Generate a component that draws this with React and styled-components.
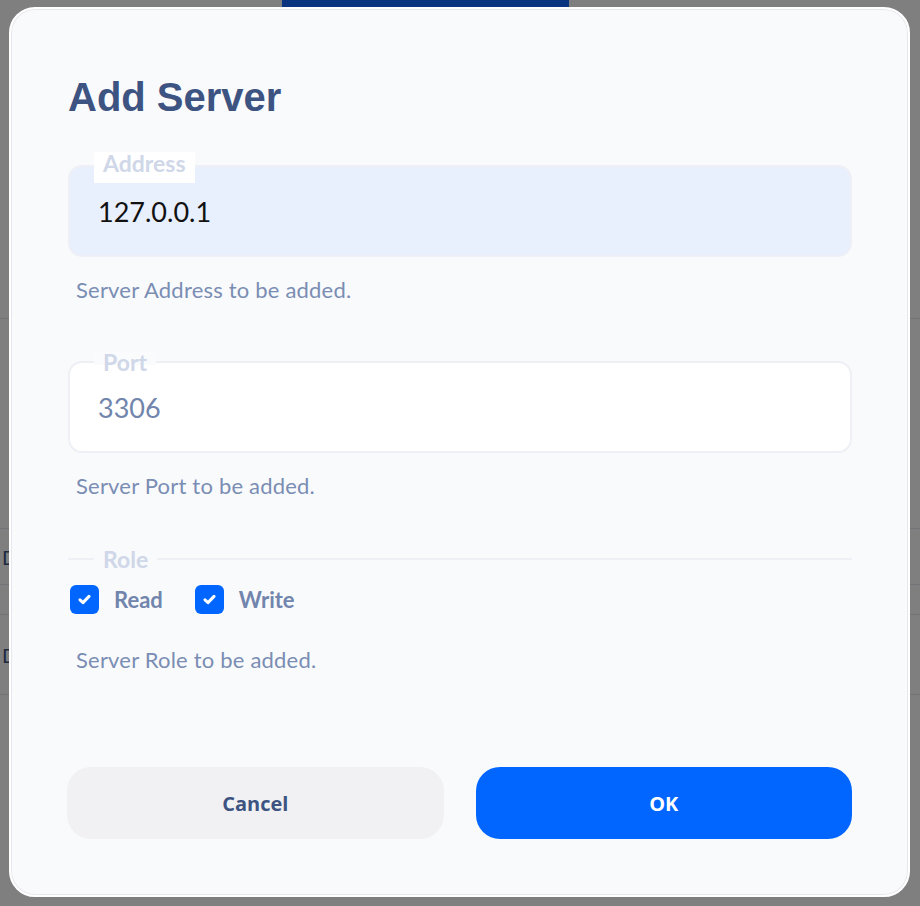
import React from "react";
import styled, { createGlobalStyle } from "styled-components";

const GlobalStyle = createGlobalStyle`
  html, body {
    margin: 0;
    padding: 0;
    height: 100%;
    background: #ffffff;
    font-family: "Lato", "Noto Sans", sans-serif;
  }
  #root {
    height: 100%;
  }
  * {
    box-sizing: border-box;
  }
`;

// --- page behind the modal ---
const Page = styled.div`
  height: 100%;
  display: flex;
  flex-direction: column;
  background: #ffffff;
  color: #3d5482;
`;

const TopBar = styled.div`
  height: 14px;
  display: flex;
  padding-left: 282px;
`;

const ActiveTab = styled.div`
  width: 287px;
  background: #1468ff;
`;

const PageRow = styled.div`
  height: ${(p) => p.h}px;
  border-bottom: 1px solid #e3e7ef;
  padding-left: 2px;
  font-size: 20px;
  display: flex;
  align-items: center;
`;

const Overlay = styled.div`
  position: fixed;
  inset: 0;
  background: rgba(0, 0, 0, 0.5);
  display: flex;
  align-items: flex-start;
  justify-content: flex-start;
  padding: 7px 0 0 9px;
`;

// --- modal ---
const Modal = styled.div`
  width: 901px;
  height: 890px;
  background: #f9fafc;
  border: 2px solid #ffffff;
  box-shadow: inset 0 0 0 1px #e6e8ee;
  border-radius: 26px;
  padding: 64px 56px 56px;
  display: flex;
  flex-direction: column;
`;

const Title = styled.h2`
  margin: 0 0 0 1px;
  font-family: "Liberation Sans", Arial, sans-serif;
  font-weight: 700;
  font-size: 40px;
  line-height: 48px;
  color: #3d5482;
`;

const FieldWrap = styled.div`
  position: relative;
  padding-top: ${(p) => p.offset}px;
  margin-top: ${(p) => p.gap}px;
`;

const FloatLabel = styled.span`
  position: absolute;
  top: 0;
  left: 27px;
  height: ${(p) => p.h}px;
  padding: 0 9px;
  background: ${(p) => p.bg};
  color: #cfd7e8;
  font-weight: 700;
  font-size: 23px;
  line-height: 22px;
`;

const InputBox = styled.div`
  height: 92px;
  margin-left: 1px;
  border: 2px solid #eef0f5;
  border-radius: 14px;
  background: ${(p) => (p.filled ? "#e8effd" : "#ffffff")};
  padding: 0 28px;
  display: flex;
  align-items: center;
  font-size: 27px;
  color: ${(p) => (p.filled ? "#111111" : "#7185ad")};
`;

const Helper = styled.p`
  margin: ${(p) => p.top}px 0 0 9px;
  font-size: 22px;
  line-height: 24px;
  letter-spacing: 0.2px;
  color: #7a8db3;
`;

const RoleHeader = styled.div`
  margin-top: 50px;
  margin-left: 1px;
  display: flex;
  align-items: center;
  gap: 9px;
  color: #cfd7e8;
  font-weight: 700;
  font-size: 23px;
  line-height: 22px;
`;

const Rule = styled.div`
  height: 2px;
  background: #eef0f5;
  width: ${(p) => (p.grow ? "auto" : "26px")};
  flex: ${(p) => (p.grow ? 1 : "none")};
`;

const CheckRow = styled.div`
  margin-top: 15px;
  margin-left: 3px;
  display: flex;
  align-items: center;
  gap: 32px;
`;

const CheckItem = styled.label`
  display: flex;
  align-items: center;
  gap: 15px;
  font-size: 22px;
  font-weight: 700;
  color: #7185ad;
`;

const Box = styled.span`
  width: 29px;
  height: 29px;
  border-radius: 6px;
  background: #0066ff;
  display: flex;
  align-items: center;
  justify-content: center;
`;

const Buttons = styled.div`
  margin-top: auto;
  display: grid;
  grid-template-columns: 1fr 1fr;
  gap: 32px;
`;

const Button = styled.button`
  height: 72px;
  border: none;
  border-radius: 24px;
  background: ${(p) => (p.primary ? "#0066ff" : "#f1f1f3")};
  color: ${(p) => (p.primary ? "#ffffff" : "#3d5482")};
  font-family: "Open Sans", "Noto Sans", sans-serif;
  font-weight: 700;
  font-size: 20px;
`;

const Check = () => (
  <svg width="13" height="11" viewBox="0 0 13 11" fill="none">
    <path d="M2 5.8l3 2.8L11 2.4" stroke="#fff" strokeWidth="3" strokeLinecap="round" strokeLinejoin="round" />
  </svg>
);

const Checkbox = ({ label }) => (
  <CheckItem>
    <Box>
      <Check />
    </Box>
    {label}
  </CheckItem>
);

export default function App() {
  return (
    <>
      <GlobalStyle />
      <Page>
        <TopBar>
          <ActiveTab />
        </TopBar>
        <PageRow h={305} />
        <PageRow h={210} />
        <PageRow h={56}>D</PageRow>
        <PageRow h={30} />
        <PageRow h={80}>D</PageRow>
      </Page>
      <Overlay>
        <Modal>
          <Title>Add Server</Title>

          <FieldWrap offset={13} gap={31}>
            <FloatLabel h={31} bg="#ffffff">Address</FloatLabel>
            <InputBox filled>127.0.0.1</InputBox>
          </FieldWrap>
          <Helper top={21}>Server Address to be added.</Helper>

          <FieldWrap offset={10} gap={49}>
            <FloatLabel h={14} bg="#fafbfd">Port</FloatLabel>
            <InputBox>3306</InputBox>
          </FieldWrap>
          <Helper top={21}>Server Port to be added.</Helper>

          <RoleHeader>
            <Rule />
            Role
            <Rule grow />
          </RoleHeader>
          <CheckRow>
            <Checkbox label="Read" />
            <Checkbox label="Write" />
          </CheckRow>
          <Helper top={34}>Server Role to be added.</Helper>

          <Buttons>
            <Button>Cancel</Button>
            <Button primary>OK</Button>
          </Buttons>
        </Modal>
      </Overlay>
    </>
  );
}
